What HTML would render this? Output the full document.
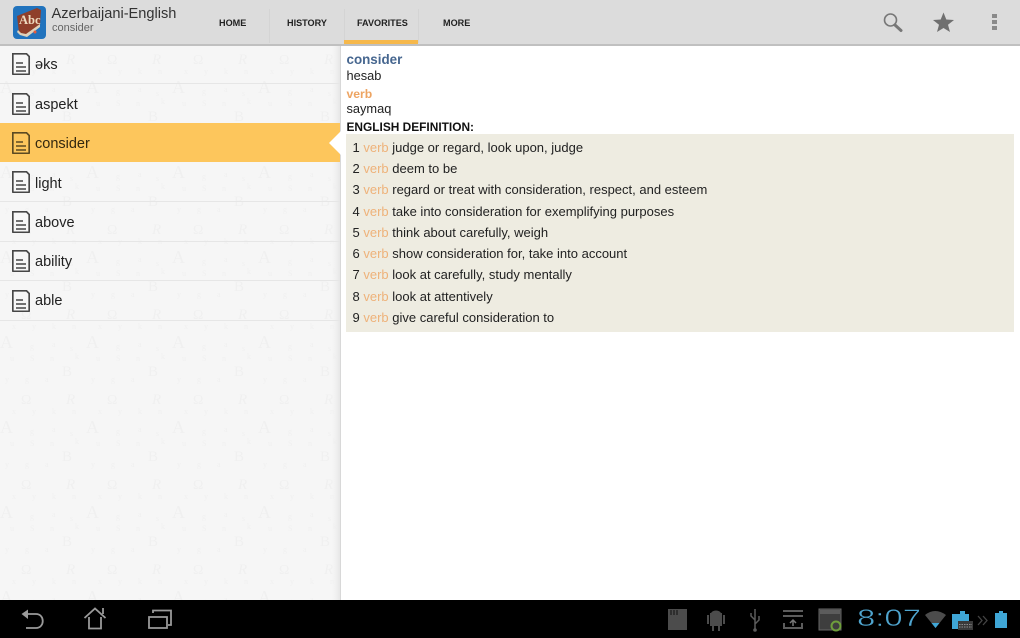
<!DOCTYPE html>
<html><head><meta charset="utf-8"><style>
html,body{margin:0;padding:0;width:1020px;height:638px;overflow:hidden;background:#fff;font-family:"Liberation Sans",Arial,sans-serif}
#r{position:absolute;left:0;top:0;width:1020px;height:638px;overflow:hidden;filter:blur(.35px)}
.a{position:absolute;white-space:nowrap}
.tab{position:absolute;top:17px;font-size:9.1px;font-weight:bold;color:#222;line-height:12px}
.sep{position:absolute;top:9px;width:1px;height:34px;background:#d4d4d4}
.w{position:absolute;left:35px;font-size:14.5px;color:#222;line-height:18px}
.ln{position:absolute;left:0;width:340px;height:1px;background:#e6e6e6}
.ic{position:absolute;left:12px;width:18px;height:22px}
.d{position:absolute;left:352.500px;font-size:13px;line-height:16px;color:#222;white-space:nowrap}
.d i{font-style:normal;color:#eeb27a}
</style></head><body><div id="r">
<svg class="a" style="left:0;top:44px" width="340" height="556" xmlns="http://www.w3.org/2000/svg">
<defs><pattern id="p" width="86" height="85" patternUnits="userSpaceOnUse">
<g font-family="Liberation Serif" fill="#f0f0f0">
<text x="0" y="49" font-size="18">A</text>
<text x="62" y="77" font-size="15">B</text>
<text x="21" y="20" font-size="14">Ω</text>
<text x="66" y="20" font-size="15" font-style="italic">R</text>
<g font-size="8"><text x="12" y="30">x</text><text x="32" y="30">y</text><text x="52" y="30">k</text><text x="72" y="30">n</text>
<text x="30" y="50">g</text><text x="52" y="48">a</text><text x="70" y="52">s</text>
<text x="10" y="62">u</text><text x="30" y="62">S</text><text x="50" y="62">n</text><text x="75" y="60">k</text>
<text x="5" y="83">y</text><text x="25" y="83">g</text><text x="45" y="83">a</text></g>
</g></pattern>
<linearGradient id="g" x1="0" x2="1"><stop offset="0" stop-color="#f5f5f5" stop-opacity="0"/><stop offset="1" stop-color="#e6e6e6"/></linearGradient></defs>
<rect width="340" height="556" fill="#f6f6f6"/>
<rect width="340" height="556" fill="url(#p)"/>
<rect x="330" width="10" height="556" fill="url(#g)"/>
</svg>
<div class="a" style="left:340px;top:44px;width:1px;height:556px;background:#d8d8d8"></div>

<!-- top bar -->
<div class="a" style="left:0;top:0;width:1020px;height:44px;background:#dcdcdc;border-bottom:2px solid #c0c0c0;box-sizing:content-box"></div>
<svg class="a" style="left:13px;top:6px" width="33" height="33" viewBox="0 0 33 33">
<rect width="33" height="33" rx="4" fill="#2173bd"/>
<path d="M4 10L24 2L28 4L27 19L13 29L6 27Z" fill="#8f3f2a"/>
<path d="M5 24L8 27L13 28L27 18L27 21L14 31L7 29L4 26Z" fill="#dfd2bb"/>
<text x="6" y="18" font-family="Liberation Serif" font-weight="bold" font-size="12.500" fill="#efdcc0">Abc</text>
<circle cx="22" cy="26" r="1.500" fill="#e65a3c"/>
</svg>
<div class="a" style="left:51.500px;top:5px;font-size:14.600px;line-height:18px;color:#333">Azerbaijani-English</div>
<div class="a" style="left:52px;top:21px;font-size:11px;line-height:14px;color:#666">consider</div>
<div class="tab" style="left:219px">HOME</div>
<div class="sep" style="left:269px"></div>
<div class="tab" style="left:287px">HISTORY</div>
<div class="sep" style="left:344px"></div>
<div class="tab" style="left:357px">FAVORITES</div>
<div class="sep" style="left:418px"></div>
<div class="tab" style="left:443px">MORE</div>
<div class="a" style="left:344px;top:40px;width:74px;height:4px;background:#f6b84b"></div>
<svg class="a" style="left:880px;top:10px" width="125" height="25" viewBox="0 0 125 25">
<circle cx="10.500" cy="10" r="6" fill="none" stroke="#777" stroke-width="1.600"/>
<path d="M15 15L21 20.500" stroke="#777" stroke-width="3" stroke-linecap="round"/>
<path d="M63.500 2.500L66.300 9.500L74 10L68 14.800L70 22L63.500 18L57 22L59 14.800L53 10L60.700 9.500Z" fill="#6f6f6f"/>
<rect x="112" y="4" width="5" height="4" fill="#8a8a8a"/><rect x="112" y="10" width="5" height="4" fill="#8a8a8a"/><rect x="112" y="16" width="5" height="4" fill="#8a8a8a"/>
</svg>

<!-- list -->
<div class="a" style="left:0;top:123px;width:340px;height:39px;background:#fdc65c"></div>
<svg class="a" style="left:328px;top:131px" width="13" height="24"><path d="M13 0L1 12L13 24Z" fill="#fff"/></svg>
<div class="ln" style="top:83px"></div><div class="ln" style="top:201px"></div><div class="ln" style="top:241px"></div><div class="ln" style="top:280px"></div><div class="ln" style="top:320px"></div>

<svg width="0" height="0" style="position:absolute"><defs><g id="doc"><path d="M.8.8H14.500L17.200 3.500V20.800a.6.6 0 0 1-.6.6H1.400a.6.6 0 0 1-.6-.6Z" fill="#f7f7f7" stroke="#474747" stroke-width="1.700"/><path d="M4 10H11M4 14H14M4 18H14" stroke="#474747" stroke-width="1.500" fill="none"/></g></defs></svg>
<svg class="ic" style="top:53px" viewBox="0 0 18 22"><use href="#doc"/></svg>
<svg class="ic" style="top:93px" viewBox="0 0 18 22"><use href="#doc"/></svg>
<svg class="ic" style="top:132px" viewBox="0 0 18 22"><path d="M.8.8H14.500L17.200 3.500V20.800a.6.6 0 0 1-.6.6H1.400a.6.6 0 0 1-.6-.6Z" fill="#fdc65c" stroke="#5c4a22" stroke-width="1.700"/><path d="M4 10H11M4 14H14M4 18H14" stroke="#5c4a22" stroke-width="1.500"/></svg>
<svg class="ic" style="top:171px" viewBox="0 0 18 22"><use href="#doc"/></svg>
<svg class="ic" style="top:211px" viewBox="0 0 18 22"><use href="#doc"/></svg>
<svg class="ic" style="top:250px" viewBox="0 0 18 22"><use href="#doc"/></svg>
<svg class="ic" style="top:290px" viewBox="0 0 18 22"><use href="#doc"/></svg>
<div class="w" style="top:56px">əks</div>
<div class="w" style="top:96px">aspekt</div>
<div class="w" style="top:135px;color:#33280f">consider</div>
<div class="w" style="top:175px">light</div>
<div class="w" style="top:214px">above</div>
<div class="w" style="top:253px">ability</div>
<div class="w" style="top:292px">able</div>

<!-- detail -->
<div class="a" style="left:346.500px;top:51px;font-size:13.400px;line-height:17px;font-weight:bold;color:#46668f">consider</div>
<div class="a" style="left:346.500px;top:68px;font-size:12.800px;line-height:16px;color:#222">hesab</div>
<div class="a" style="left:346.500px;top:86px;font-size:12.200px;line-height:16px;font-weight:bold;color:#eda462">verb</div>
<div class="a" style="left:346.500px;top:101px;font-size:12.800px;line-height:16px;color:#222">saymaq</div>
<div class="a" style="left:346.500px;top:119px;font-size:11.900px;line-height:16px;font-weight:bold;color:#111">ENGLISH DEFINITION:</div>
<div class="a" style="left:346px;top:134px;width:668px;height:198px;background:#eeece1"></div>
<div class="d" style="top:140px">1 <i>verb</i> judge or regard, look upon, judge</div>
<div class="d" style="top:161px">2 <i>verb</i> deem to be</div>
<div class="d" style="top:182px">3 <i>verb</i> regard or treat with consideration, respect, and esteem</div>
<div class="d" style="top:204px">4 <i>verb</i> take into consideration for exemplifying purposes</div>
<div class="d" style="top:225px">5 <i>verb</i> think about carefully, weigh</div>
<div class="d" style="top:246px">6 <i>verb</i> show consideration for, take into account</div>
<div class="d" style="top:267px">7 <i>verb</i> look at carefully, study mentally</div>
<div class="d" style="top:289px">8 <i>verb</i> look at attentively</div>
<div class="d" style="top:310px">9 <i>verb</i> give careful consideration to</div>

<!-- nav bar -->
<div class="a" style="left:0;top:600px;width:1020px;height:38px;background:#000"></div>
<svg class="a" style="left:0;top:600px" width="200" height="38" viewBox="0 0 200 38" fill="none" stroke="#9a9a9a" stroke-width="1.800">
<path d="M28 14H36C45 14 45 28 36 28H26"/><path d="M21.500 14L28 9.500V19Z" fill="#9a9a9a" stroke="none"/>
<path d="M84.500 18L95 8.500L105.500 18M89 17V28.500H101V17M103 8V14"/>
<path d="M149 17H167V28H149Z"/><path d="M153 13V10.500H171V25H168"/>
</svg>
<svg class="a" style="left:660px;top:600px" width="360" height="38" viewBox="0 0 360 38">
<path d="M8 9H27V30H8Z" fill="#4c4c4c"/><path d="M11 10V15M14 10V15M17 10V15" stroke="#111" stroke-width="1"/>
<path d="M50 13H62V26H50Z" fill="#4c4c4c"/><path d="M51 14.500A5.500 5.500 0 0 1 61 14.500Z" fill="#4c4c4c" stroke="#4c4c4c" stroke-width="1.500"/><path d="M48 15V24M64 15V24M53 26V31M59 26V31" stroke="#4c4c4c" stroke-width="2"/>
<path d="M95 9V30M95 20L91 16V13M95 24L99 20V16" stroke="#5c5c5c" stroke-width="1.500" fill="none"/><circle cx="95" cy="30" r="1.800" fill="#5c5c5c"/>
<path d="M123 11H143M123 16H143" stroke="#5c5c5c" stroke-width="2"/><path d="M124 23V28H142V23" stroke="#5c5c5c" stroke-width="2" fill="none"/><path d="M133 26V21M130 23L133 20L136 23" stroke="#777" stroke-width="1.500" fill="none"/>
<rect x="159" y="9" width="22" height="21" fill="#3e3e3e" stroke="#666" stroke-width="1"/><rect x="160" y="10" width="20" height="4" fill="#5c5c5c"/><circle cx="176" cy="26" r="4.500" fill="none" stroke="#6f9f3c" stroke-width="2"/>
<path d="M265 15Q275 7 286 15L275.500 28Z" fill="#4c4c4c"/><path d="M271.500 23L275.500 28L279.500 23Z" fill="#3fa6d6"/>
<path d="M292 14H300V11H305V14H309V29H292Z" fill="#3fa6d6"/><rect x="298" y="21" width="15" height="9" fill="#3a3a3a"/><path d="M299 24.500H312M299 27H312" stroke="#aaa" stroke-width=".8" stroke-dasharray="1.500 1"/>
<path d="M318 16L322 20.500L318 25M323 16L327 20.500L323 25" stroke="#444" stroke-width="1.300" fill="none"/>
<path d="M335 13H339V11H343V13H347V28H335Z" fill="#3fa6d6"/>
</svg>
<div class="a" style="left:857px;top:602px;font-size:24px;line-height:34px;color:#4fa5cf;letter-spacing:0;transform-origin:0 50%;transform:scaleX(1.370);-webkit-text-stroke:.5px #000">8:07</div>
</div></body></html>
